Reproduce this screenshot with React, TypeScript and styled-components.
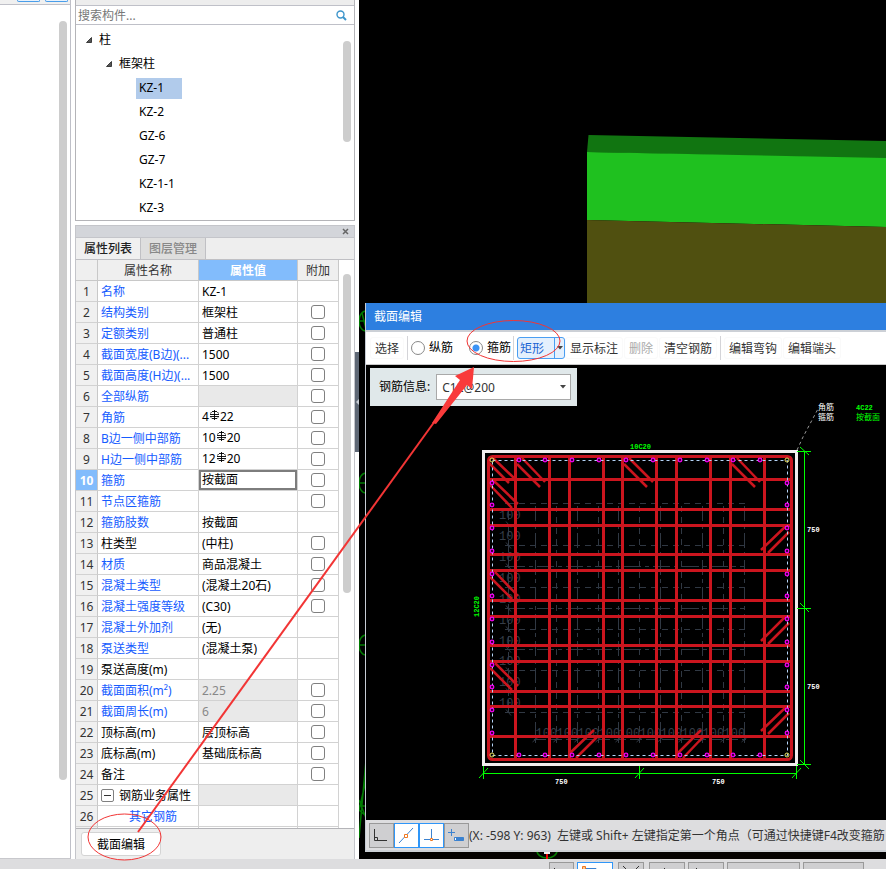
import React from "react";
import styled, { createGlobalStyle, css } from "styled-components";

const GlobalStyle = createGlobalStyle`
  * { box-sizing: border-box; }
  body { margin: 0; overflow: hidden; background: #fff; }
  body, button, input, select {
    font-family: "Noto Sans", "Noto Sans CJK SC", sans-serif;
    font-size: 12px;
    line-height: 16px;
    color: #000;
  }
`;

const Shell = styled.div`
  position: relative;
  display: flex;
  flex-direction: column;
  height: 100vh;
  overflow: hidden;
`;
const Workspace = styled.main`
  flex: 1;
  min-height: 0;
  display: flex;
`;

/* ---- left dock ---- */
const LeftDock = styled.aside`
  flex: 0 0 71px;
  display: flex;
  flex-direction: column;
  border-right: 1px solid #bfc0c8;
  border-bottom: 1px solid #c8c8cc;
`;
const LeftTop = styled.div`
  display: flex;
  flex: 0 0 5px;
  gap: 5px;
  padding-left: 17px;
  background: #f0f0f0;
  border-bottom: 1px solid #bfc0c8;
`;
const TopTab = styled.button`
  width: 23px;
  height: 2px;
  padding: 0;
  background: #e8f2fc;
  border: 1px solid #4a9eea;
  border-top: 0;
  border-radius: 0 0 3px 3px;
`;
const LeftBody = styled.div`
  flex: 1;
  display: flex;
  justify-content: flex-end;
  padding: 16px 3px 78px 0;
`;
const ScrollThumb = styled.div<{ $length?: number }>`
  width: 8px;
  border-radius: 4px;
  background: #cdcdcd;
  ${(p) => p.$length && css`height: ${p.$length}px;`}
`;

/* ---- component tree ---- */
const SideColumn = styled.section`
  flex: 0 0 284px;
  display: flex;
  flex-direction: column;
  padding-left: 4px;
`;
const Finder = styled.div`
  flex: 0 0 221px;
  display: flex;
  flex-direction: column;
  border: 1px solid #b4b4b8;
  border-top: 0;
  margin-bottom: 4px;
`;
const FinderTop = styled.div`
  height: 6px;
  background: #ededed;
  border-bottom: 1px solid #bfc0c8;
`;
const SearchRow = styled.label`
  display: flex;
  align-items: center;
  height: 19px;
  padding: 0 7px 0 2px;
  border-bottom: 1px solid #bfc0c8;
`;
const SearchInput = styled.input`
  flex: 1;
  min-width: 0;
  height: 18px;
  border: 0;
  padding: 0;
  outline: 0;
  background: transparent;
  &::placeholder { color: #777; opacity: 1; }
`;
const TreeArea = styled.div`
  flex: 1;
  display: flex;
  justify-content: space-between;
  padding: 3px 3px 0 0;
`;
const Tree = styled.ul`
  margin: 0;
  padding: 0;
  list-style: none;
`;
const TreeItem = styled.li<{ $level: number }>`
  display: flex;
  align-items: center;
  gap: 7px;
  height: 24px;
  padding-left: ${(p) => [10, 30, 60][p.$level]}px;
`;
const TreeLabel = styled.span<{ $selected?: boolean }>`
  padding: 2px 18px 3px 3px;
  margin-left: ${(p) => (p.$selected === undefined ? -3 : 0)}px;
  background: ${(p) => (p.$selected ? "#b1cbeb" : "transparent")};
`;
const TreeScroll = styled.div`padding-top: 13px;`;

/* ---- property panel ---- */
const PropPanel = styled.div`
  flex: 1;
  min-height: 0;
  display: flex;
  flex-direction: column;
  border: 1px solid #c4c5ca;
  border-bottom: 0;
  background: #eee;
`;
const PanelBar = styled.div`
  flex: 0 0 12px;
  display: flex;
  justify-content: flex-end;
  align-items: center;
  padding-right: 3px;
  background: #d3d5da;
  border-bottom: 1px solid #c4c5ca;
`;
const CloseButton = styled.button`
  display: flex;
  padding: 2px;
  border: 0;
  background: none;
`;
const Tabs = styled.div`
  flex: 0 0 22px;
  display: flex;
  border-bottom: 1px solid #c0c0c4;
`;
const Tab = styled.button<{ $active?: boolean }>`
  width: 65px;
  padding: 0;
  border: 0;
  border-right: 1px solid #c0c0c4;
  font-weight: 500;
  color: ${(p) => (p.$active ? "#222" : "#888")};
  background: ${(p) => (p.$active ? "#f0f0f0" : "#dedede")};
`;
const GridArea = styled.div`
  flex: 1;
  min-height: 0;
  overflow: hidden;
  display: flex;
  justify-content: space-between;
  padding-right: 3px;
  background: #fff;
  border-bottom: 1px solid #b4b4b8;
`;
const GridScroll = styled.div`padding-top: 14px;`;
const PropTable = styled.table`
  width: 263px;
  table-layout: fixed;
  border-collapse: separate;
  border-spacing: 0;
  align-self: flex-start;
`;
const HeadCell = styled.th<{ $selected?: boolean }>`
  height: 21px;
  padding: 2px 0 0;
  font-weight: ${(p) => (p.$selected ? 700 : 400)};
  color: ${(p) => (p.$selected ? "#fff" : "#333")};
  background: ${(p) => (p.$selected ? "#82bcfc" : "#efefef")};
  border-right: 1px solid #c8c8c8;
  border-bottom: 1px solid #c8c8c8;
`;
const NumCell = styled.th<{ $selected?: boolean }>`
  height: 21px;
  padding: 2px 0 0;
  font-weight: ${(p) => (p.$selected ? 700 : 400)};
  color: ${(p) => (p.$selected ? "#fff" : "#333")};
  background: ${(p) => (p.$selected ? "#82bcfc" : "#f0f0f0")};
  border-right: 1px solid #c8c8c8;
  border-bottom: 1px solid #d2d2d2;
`;
const Cell = styled.td<{ $link?: boolean; $gray?: boolean; $focus?: boolean; $center?: boolean }>`
  height: 21px;
  padding: 0 0 0 ${(p) => (p.$center ? 0 : 3)}px;
  white-space: nowrap;
  overflow: hidden;
  text-align: ${(p) => (p.$center ? "center" : "left")};
  color: ${(p) => (p.$link ? "#165cff" : p.$gray ? "#888" : "#000")};
  background: ${(p) => (p.$gray ? "#e9e9e9" : "#fff")};
  border-right: 1px solid #d2d2d2;
  border-bottom: 1px solid #d2d2d2;
  ${(p) => p.$focus && css`box-shadow: inset 0 0 0 2px #7d7d7d;`}
`;
const CellLine = styled.div<{ $indent?: number; $raised?: boolean }>`
  display: flex;
  align-items: center;
  height: 19px;
  padding-top: ${(p) => (p.$raised ? 0 : 2)}px;
  padding-left: ${(p) => p.$indent ?? 0}px;
  & > svg { margin-bottom: 3px; }
`;
const TickBox = styled.input`
  appearance: none;
  display: block;
  width: 14px;
  height: 14px;
  margin: 0 auto;
  border: 1px solid #808080;
  border-radius: 3px;
  background: #fff;
`;
const Expander = styled.button`
  display: flex;
  align-items: center;
  justify-content: center;
  width: 13px;
  height: 13px;
  margin: 0 5px 2px 0;
  padding: 0;
  background: #fff;
  border: 1px solid #808080;
  border-radius: 2px;
`;
const PanelFoot = styled.div`
  flex: 0 0 30px;
  padding: 3px 5px;
`;
const FootButton = styled.button`
  width: 80px;
  height: 24px;
  padding: 2px 0 0;
  background: #fff;
  border: 1px solid #d4d4d4;
  border-radius: 3px;
`;

/* ---- 3D view ---- */
const Splitter = styled.button`
  flex: 0 0 4px;
  align-self: flex-start;
  display: flex;
  align-items: center;
  height: 100px;
  margin-top: 352px;
  padding: 0;
  border: 0;
  background: #5f6875;
`;
const View = styled.section`
  flex: 1;
  min-width: 0;
  position: relative;
  overflow: hidden;
  background: #000;
`;
const Drawing = styled.svg`
  display: block;
  flex: none;
`;

/* ---- floating section editor ---- */
const Dialog = styled.div`
  position: absolute;
  left: 6px;
  right: 0;
  top: 303px;
  bottom: 7px;
  display: flex;
  flex-direction: column;
  border-left: 1px solid #c6cbd4;
  border-bottom: 2px solid #c9ced4;
  background: #000;
`;
const TitleBar = styled.header`
  flex: 0 0 27px;
  display: flex;
  align-items: center;
  padding-left: 8px;
  color: #fff;
  background: #2d7fe0;
`;
const Toolbar = styled.div`
  flex: 0 0 35px;
  display: flex;
  align-items: center;
  padding-left: 4px;
  overflow: hidden;
  white-space: nowrap;
  background: #fff;
  border-top: 2px solid #ccd0d6;
  border-bottom: 1px solid #c9c9c9;
`;
const ToolButton = styled.button`
  flex: none;
  height: 22px;
  padding: 2px 4px 0;
  margin-right: 1px;
  color: #333;
  background: #fff;
  border: 1px solid #fafafa;
  border-radius: 3px;
  &:disabled { color: #aaa; }
`;
const Divider = styled.span`
  flex: none;
  width: 1px;
  height: 24px;
  margin: 0 3px 0 2px;
  background: #d4d4d8;
`;
const RadioLabel = styled.label`
  flex: none;
  display: flex;
  align-items: center;
  gap: 4px;
  margin-right: 16px;
  & + & { margin-right: 0; }
`;
const Radio = styled.input`
  appearance: none;
  width: 14px;
  height: 14px;
  margin: 0;
  border: 1px solid #888;
  border-radius: 50%;
  background: #fff;
  &:checked { background: radial-gradient(circle, #3b93f5 0 3px, #fff 4px); }
`;
const SplitButton = styled.div`
  flex: none;
  display: flex;
  width: 48px;
  height: 22px;
  border: 1px solid #4a9ef2;
  border-radius: 3px;
  background: #e4f0fd;
  overflow: hidden;
`;
const SplitPart = styled.button<{ $arrow?: boolean }>`
  flex: ${(p) => (p.$arrow ? "0 0 10px" : "1")};
  display: flex;
  align-items: center;
  justify-content: ${(p) => (p.$arrow ? "center" : "flex-start")};
  padding: ${(p) => (p.$arrow ? "0" : "2px 0 0 2px")};
  color: #1a64d2;
  background: none;
  border: 0;
  border-left: ${(p) => (p.$arrow ? "1px solid #4a9ef2" : "0")};
`;
const CadArea = styled.div`
  flex: 1;
  min-height: 0;
  position: relative;
  overflow: hidden;
`;
const InfoBox = styled.label`
  position: absolute;
  left: 4px;
  top: 3px;
  display: flex;
  align-items: center;
  gap: 6px;
  height: 38px;
  padding: 0 6px 0 9px;
  background: #e0e8ea;
`;
const ComboWrap = styled.span`
  display: grid;
  align-items: center;
  width: 135px;
  & > * { grid-area: 1 / 1; }
  & > svg { justify-self: end; margin-right: 5px; pointer-events: none; }
`;
const Combo = styled.select`
  appearance: none;
  height: 26px;
  padding: 2px 5px 0;
  color: #333;
  background: #fff;
  border: 1px solid #a9a9a9;
  border-radius: 0;
`;
const StatusBar = styled.footer`
  flex: 0 0 30px;
  display: flex;
  align-items: center;
  padding-left: 3px;
  overflow: hidden;
  white-space: nowrap;
  color: #333;
  background: #dddddf;
`;
const Coordinates = styled.span`
  flex: 0 0 88px;
  padding-top: 2px;
`;
const Hint = styled.span`
  flex: none;
  padding-top: 2px;
`;
const SnapButton = styled.button<{ $on?: boolean }>`
  flex: none;
  display: flex;
  width: 25px;
  height: 25px;
  padding: 1px;
  border: 1px solid ${(p) => (p.$on ? "#2f96f8" : "#999")};
  background: ${(p) => (p.$on ? "#fff" : "#cfcfd1")};
`;

/* ---- application status strip ---- */
const BottomStrip = styled.footer`
  flex: 0 0 10px;
  display: flex;
  gap: 5px;
  justify-content: flex-end;
  padding: 3px 22px 0 0;
  overflow: hidden;
  background: #dddddf;
`;
const StripGroup = styled.div`
  display: flex;
  gap: 3px;
`;
const StripButton = styled.button<{ $w: number; $on?: boolean }>`
  flex: 0 0 ${(p) => p.$w}px;
  height: 22px;
  display: flex;
  padding: 0;
  overflow: hidden;
  border: 1px solid ${(p) => (p.$on ? "#2f96f8" : "#999")};
  background: ${(p) => (p.$on ? "#fff" : "#cfcfd1")};
`;
const Markup = styled.svg`
  position: absolute;
  left: 0;
  top: 0;
  pointer-events: none;
`;

type Prop = {
  name: string;
  value?: string;
  black?: boolean;
  gray?: boolean;
  noTick?: boolean;
  bar?: [string, string];
};
const props: Prop[] = [
  { name: "名称", value: "KZ-1", noTick: true },
  { name: "结构类别", value: "框架柱" },
  { name: "定额类别", value: "普通柱" },
  { name: "截面宽度(B边)(...", value: "1500" },
  { name: "截面高度(H边)(...", value: "1500" },
  { name: "全部纵筋", gray: true },
  { name: "角筋", bar: ["4", "22"] },
  { name: "B边一侧中部筋", bar: ["10", "20"] },
  { name: "H边一侧中部筋", bar: ["12", "20"] },
  { name: "箍筋", value: "按截面" },
  { name: "节点区箍筋" },
  { name: "箍筋肢数", value: "按截面", noTick: true },
  { name: "柱类型", value: "(中柱)", black: true },
  { name: "材质", value: "商品混凝土" },
  { name: "混凝土类型", value: "(混凝土20石)" },
  { name: "混凝土强度等级", value: "(C30)" },
  { name: "混凝土外加剂", value: "(无)", noTick: true },
  { name: "泵送类型", value: "(混凝土泵)", noTick: true },
  { name: "泵送高度(m)", black: true, noTick: true },
  { name: "截面面积(m²)", value: "2.25", gray: true },
  { name: "截面周长(m)", value: "6", gray: true },
  { name: "顶标高(m)", value: "层顶标高", black: true },
  { name: "底标高(m)", value: "基础底标高", black: true },
  { name: "备注", black: true },
  { name: "钢筋业务属性", black: true, gray: true, noTick: true },
  { name: "其它钢筋", noTick: true },
  { name: "", noTick: true },
];

const RebarMark = () => (
  <svg width="11" height="11" viewBox="0 0 11 11" fill="none" stroke="#000" aria-hidden="true">
    <path d="M5.500 0v10M3 1.500h5M2.500 2L1.500 3.500M8.500 2L9.500 3.500M1 4.500h9M1 6.500h9M2 7.500L3 8.500h5L9 7.500" strokeWidth=".9" />
  </svg>
);

const Caret = () => (
  <svg width="6" height="4" viewBox="0 0 6 4" aria-hidden="true"><path d="M0 0h6L3 3.500z" fill="#444" /></svg>
);

const TreeArrow = () => (
  <svg width="6" height="6" viewBox="0 0 6 6" aria-hidden="true"><path d="M5.500 .5V5.500H.5z" fill="#555" stroke="#222" strokeWidth=".8" /></svg>
);

const barX = [519, 545, 572, 599, 626, 653, 680, 707, 733, 760];
const barY = [483, 505, 528, 551, 574, 596, 619, 642, 665, 687, 710, 733];
const stirrupX = [515.5, 549.5, 569.5, 603.5, 622.5, 656.5, 676.5, 710.5, 730.5, 764.5];
const stirrupY = [479.5, 509.5, 525.5, 554.5, 570.5, 600.5, 616.5, 645.5, 661.5, 691.5, 706.5, 736.5];
const guideX = [535.5, 556.5, 577.5, 598.5, 618.5, 639.5, 660.5, 681.5, 702.5, 723.5, 744.5];
const guideY = [503.5, 524.5, 545.5, 566.5, 587.5, 608.5, 629.5, 649.5, 670.5, 691.5, 712.5];
const hooks = [
  "M489 463l20 20M493 458l21 20M517 464l23 23M522 458l23 24M624 464l23 23M629 458l24 24M732 464l23 23M737 458l23 24",
  "M490 485l22 23M494 481l24 23M490 577l22 22M495 572l23 24M490 668l22 22M495 663l23 23",
  "M761 550l26-25M768 553l21-21M761 641l25-25M768 644l21-21M761 731l24-23M768 734l21-21",
  "M570 753l24-23M576 758l22-22M678 753l23-23M683 758l21-22",
].join("");

const SectionDrawing = () => (
  <Drawing width="520" height="456" viewBox="366 365 520 456" fontFamily="'Liberation Mono', 'Noto Sans CJK SC', monospace">
    <title>柱截面配筋</title>
    <g stroke="#303843" fill="none">
      {guideX.map((x, i) => <path key={x} d={`M${x} 506V742`} strokeDasharray={i % 2 ? "6 5" : "15 4 4 4"} />)}
      {guideY.map((y, i) => <path key={y} d={`M508 ${y}H745`} strokeDasharray={i % 2 ? "17 4 4 4" : "6 5"} />)}
      <path d="M508.500 508V713M534 739.500H746" strokeDasharray="12 4" />
      {guideY.map((y) => <path key={y} d={`M505 ${y}h7M506 ${y - 3}l5 6`} />)}
      {guideX.map((x) => <path key={x} d={`M${x} 736v7M${x - 3} 742l6-5`} />)}
    </g>
    <g fill="#353d48" fontSize="12">
      {guideY.slice(0, 10).map((y) => <text key={y} x="499" y={y + 15}>100</text>)}
      {guideX.slice(0, 10).map((x) => <text key={x} x={x} y="737">100</text>)}
    </g>
    <rect x="483.500" y="451.500" width="313" height="313" fill="none" stroke="#f2eeee" strokeWidth="3" />
    <g stroke="#cb151e" strokeWidth="3" fill="none">
      <rect x="488.500" y="456.500" width="303" height="303" rx="4" />
      {stirrupX.map((x) => <path key={x} d={`M${x} 457V759`} />)}
      {stirrupY.map((y) => <path key={y} d={`M488 ${y}H790`} />)}
      <path d={hooks} strokeWidth="2.500" />
    </g>
    <rect x="492.500" y="460.500" width="295" height="295" fill="none" stroke="#b5d4f8" strokeDasharray="3 3" />
    <g stroke="#f000f0" fill="#300030" strokeWidth="1.300">
      {barX.map((x) => <React.Fragment key={x}><circle cx={x} cy="460" r="1.800" /><circle cx={x} cy="755" r="1.800" /></React.Fragment>)}
      {barY.map((y) => <React.Fragment key={y}><circle cx="492" cy={y} r="1.800" /><circle cx="787" cy={y} r="1.800" /></React.Fragment>)}
    </g>
    <g stroke="#e8e060" fill="none">
      <circle cx="492" cy="460" r="2" /><circle cx="787" cy="460" r="2" />
      <circle cx="492" cy="755" r="2" /><circle cx="787" cy="755" r="2" />
    </g>
    <g stroke="#00ff00" fill="none">
      <path d="M804.500 451V765M797 451.500h14M797 608.500h14M797 764.500h14M800 447l9 8M800 603l9 9M800 760l9 9" />
      <path d="M483 773.500H797M483.500 766v13M639.500 766v13M796.500 766v13M479 778l9-10M635 778l9-10M792 778l9-10" />
    </g>
    <path d="M797 450l6-13L819 407" stroke="#999" strokeDasharray="3 3" fill="none" />
    <g fontSize="7" fontWeight="700" fill="#fff">
      <text x="807" y="532">750</text>
      <text x="807" y="689">750</text>
      <text x="555" y="784">750</text>
      <text x="712" y="784">750</text>
      <text x="818" y="410" fontSize="8" fontWeight="400">角筋</text>
      <text x="818" y="420" fontSize="8" fontWeight="400">箍筋</text>
    </g>
    <g fontSize="7" fontWeight="700" fill="#00ff00">
      <text x="630" y="449">10C20</text>
      <text x="856" y="410">4C22</text>
      <text x="856" y="420" fontSize="8" fontWeight="400">按截面</text>
      <text transform="translate(479 617) rotate(-90)">12C20</text>
    </g>
  </Drawing>
);

const SceneDrawing = () => (
  <Drawing width="527" height="859" viewBox="359 0 527 859" aria-hidden="true">
    <path d="M588.500 135L886 141V159L587 152z" fill="#117511" />
    <path d="M587 152L886 158V227L587 220z" fill="#1fc11f" />
    <path d="M587 220L886 227V303H587z" fill="#505010" />
    <g stroke="#007a00" fill="none" strokeWidth="1.500">
      <ellipse cx="366" cy="321" rx="7" ry="10" /><path d="M359 321h7M362 313l4 16" />
      <ellipse cx="366" cy="483" rx="7" ry="10" /><path d="M359 483h7" />
      <ellipse cx="366" cy="645" rx="7" ry="10" /><path d="M359 645h7" />
      <path d="M366 760L359 838M366 780l-7 30 7 6M359 800l7 18M359 806h7" />
      <ellipse cx="547" cy="851" rx="10" ry="7" />
    </g>
    <path d="M547 851v8" stroke="#f00000" strokeWidth="2" />
    <path d="M544 853h6" stroke="#eee" strokeWidth="2" />
  </Drawing>
);

const treeLeaves = ["KZ-1", "KZ-2", "GZ-6", "GZ-7", "KZ-1-1", "KZ-3"];

export default function App() {
  return (
    <Shell>
      <GlobalStyle />
      <Workspace>
        <LeftDock>
          <LeftTop><TopTab aria-label="视图一" /><TopTab aria-label="视图二" /></LeftTop>
          <LeftBody><ScrollThumb /></LeftBody>
        </LeftDock>

        <SideColumn>
          <Finder>
            <FinderTop />
            <SearchRow>
              <SearchInput placeholder="搜索构件..." aria-label="搜索构件" />
              <svg width="11" height="11" viewBox="0 0 11 11" fill="none" stroke="#3d95cb" aria-hidden="true">
                <circle cx="4.500" cy="4.500" r="3.500" strokeWidth="1.400" /><path d="M7 7l3 3" strokeWidth="2" />
              </svg>
            </SearchRow>
            <TreeArea>
              <Tree>
                <TreeItem $level={0}><TreeArrow /><TreeLabel>柱</TreeLabel></TreeItem>
                <TreeItem $level={1}><TreeArrow /><TreeLabel>框架柱</TreeLabel></TreeItem>
                {treeLeaves.map((t, i) => (
                  <TreeItem key={t} $level={2}><TreeLabel $selected={i === 0}>{t}</TreeLabel></TreeItem>
                ))}
              </Tree>
              <TreeScroll><ScrollThumb $length={101} /></TreeScroll>
            </TreeArea>
          </Finder>

          <PropPanel>
            <PanelBar>
              <CloseButton aria-label="关闭">
                <svg width="7" height="7" viewBox="0 0 7 7" stroke="#666" strokeWidth="1.500"><path d="M1 1l5 5M6 1L1 6" /></svg>
              </CloseButton>
            </PanelBar>
            <Tabs role="tablist">
              <Tab role="tab" aria-selected="true" $active>属性列表</Tab>
              <Tab role="tab" aria-selected="false">图层管理</Tab>
            </Tabs>
            <GridArea>
              <PropTable>
                <colgroup><col width="22" /><col width="101" /><col width="99" /><col width="41" /></colgroup>
                <thead>
                  <tr><HeadCell aria-label="序号" /><HeadCell>属性名称</HeadCell><HeadCell $selected>属性值</HeadCell><HeadCell>附加</HeadCell></tr>
                </thead>
                <tbody>
                  {props.map((p, i) => {
                    const n = i + 1;
                    return (
                      <tr key={n}>
                        <NumCell scope="row" $selected={n === 10}>{n < 27 ? n : ""}</NumCell>
                        <Cell $link={!p.black}>
                          <CellLine $indent={n === 26 ? 28 : 0}>
                            {n === 25 && (
                              <Expander aria-label="折叠">
                                <svg width="7" height="1" viewBox="0 0 7 1"><path d="M0 0h7v1H0z" fill="#333" /></svg>
                              </Expander>
                            )}
                            {p.name}
                          </CellLine>
                        </Cell>
                        <Cell $gray={p.gray} $focus={n === 10}>
                          <CellLine $raised={!!p.bar || n === 10}>
                            {p.bar ? <>{p.bar[0]}<RebarMark />{p.bar[1]}</> : p.value}
                          </CellLine>
                        </Cell>
                        <Cell $center>{!p.noTick && <TickBox type="checkbox" aria-label={`附加 ${p.name}`} />}</Cell>
                      </tr>
                    );
                  })}
                </tbody>
              </PropTable>
              <GridScroll><ScrollThumb $length={319} /></GridScroll>
            </GridArea>
            <PanelFoot><FootButton>截面编辑</FootButton></PanelFoot>
          </PropPanel>
        </SideColumn>

        <Splitter aria-label="收起面板">
          <svg width="4" height="6" viewBox="0 0 4 6"><path d="M4 0v6L1 3z" fill="#c9ced6" /></svg>
        </Splitter>

        <View>
          <SceneDrawing />
          <Dialog role="dialog" aria-label="截面编辑">
            <TitleBar>截面编辑</TitleBar>
            <Toolbar>
              <ToolButton>选择</ToolButton>
              <Divider />
              <RadioLabel><Radio type="radio" name="bar" />纵筋</RadioLabel>
              <RadioLabel><Radio type="radio" name="bar" defaultChecked />箍筋</RadioLabel>
              <Divider />
              <SplitButton>
                <SplitPart>矩形</SplitPart>
                <SplitPart $arrow aria-label="更多形状"><Caret /></SplitPart>
              </SplitButton>
              <ToolButton>显示标注</ToolButton>
              <ToolButton disabled>删除</ToolButton>
              <ToolButton>清空钢筋</ToolButton>
              <Divider />
              <ToolButton>编辑弯钩</ToolButton>
              <ToolButton>编辑端头</ToolButton>
            </Toolbar>
            <CadArea>
              <SectionDrawing />
              <InfoBox>
                钢筋信息:
                <ComboWrap><Combo defaultValue="C12@200"><option>C12@200</option></Combo><Caret /></ComboWrap>
              </InfoBox>
            </CadArea>
            <StatusBar>
              <SnapButton aria-label="正交">
                <svg width="21" height="21" viewBox="0 0 21 21" fill="none" stroke="#333"><path d="M3.500 4v11.500H16M3.500 12.500h3v3" /></svg>
              </SnapButton>
              <SnapButton $on aria-label="中点">
                <svg width="21" height="21" viewBox="0 0 21 21" fill="none" stroke="#3b82d0"><path d="M3 18L17 3" /><path d="M8.500 9.500h3v3h-3z" fill="#fff" stroke="#f07820" /></svg>
              </SnapButton>
              <SnapButton $on aria-label="垂点">
                <svg width="21" height="21" viewBox="0 0 21 21" fill="none" stroke="#3b82d0"><path d="M10.500 4v11M3 14.500h15" /><path d="M9.500 13.500h2v2h-2z" fill="#fff" stroke="#f07820" /></svg>
              </SnapButton>
              <SnapButton aria-label="动态输入">
                <svg width="21" height="21" viewBox="0 0 21 21" fill="none" stroke="#3b82d0"><path d="M2 7.500h7M5.500 4v7" /><path d="M8.500 12.500h9v3h-9z" fill="#3b82d0" /><path d="M9.500 13v2" stroke="#fff" /></svg>
              </SnapButton>
              <Coordinates>(X: -598 Y: 963)</Coordinates>
              <Hint>左键或 Shift+ 左键指定第一个角点（可通过快捷键F4改变箍筋</Hint>
            </StatusBar>
          </Dialog>
        </View>
      </Workspace>

      <BottomStrip>
        <StripGroup>
          <StripButton $w={25} aria-label="正交模式"><svg width="23" height="20"><path d="M4.500 5v10H16" fill="none" stroke="#333" /></svg></StripButton>
          <StripButton $w={36} $on aria-label="捕捉"><svg width="34" height="20"><path d="M6 5.500h12V14" fill="none" stroke="#3b82d0" /><path d="M4.500 3.500h3v4h-3z" fill="#fbc48c" stroke="#f07820" /></svg></StripButton>
        </StripGroup>
        <StripButton $w={26} aria-label="交点"><svg width="24" height="20"><path d="M4 3l8 8 8-8" fill="none" stroke="#333" /></svg></StripButton>
        <StripGroup>
          <StripButton $w={36} aria-label="垂点捕捉"><svg width="34" height="20"><path d="M14.500 5v12" stroke="#333" /></svg></StripButton>
          <StripButton $w={36} aria-label="中点捕捉"><svg width="34" height="20"><path d="M7.500 5v12" stroke="#333" /></svg></StripButton>
          <StripButton $w={73} aria-label="顶点捕捉" />
          <StripButton $w={61} aria-label="坐标" />
        </StripGroup>
      </BottomStrip>

      <Markup width="886" height="869" viewBox="0 0 886 869" fill="none" stroke="#f23535" aria-hidden="true">
        <ellipse cx="124.500" cy="837" rx="36.500" ry="23" />
        <ellipse cx="513.500" cy="341" rx="46.500" ry="20.500" />
        <path d="M138 832L440 414" strokeWidth="2" />
        <path d="M474 367L455 376L460 380L432 423L436 424L467 385L472 389z" fill="#f93b3b" stroke="none" />
      </Markup>
    </Shell>
  );
}
